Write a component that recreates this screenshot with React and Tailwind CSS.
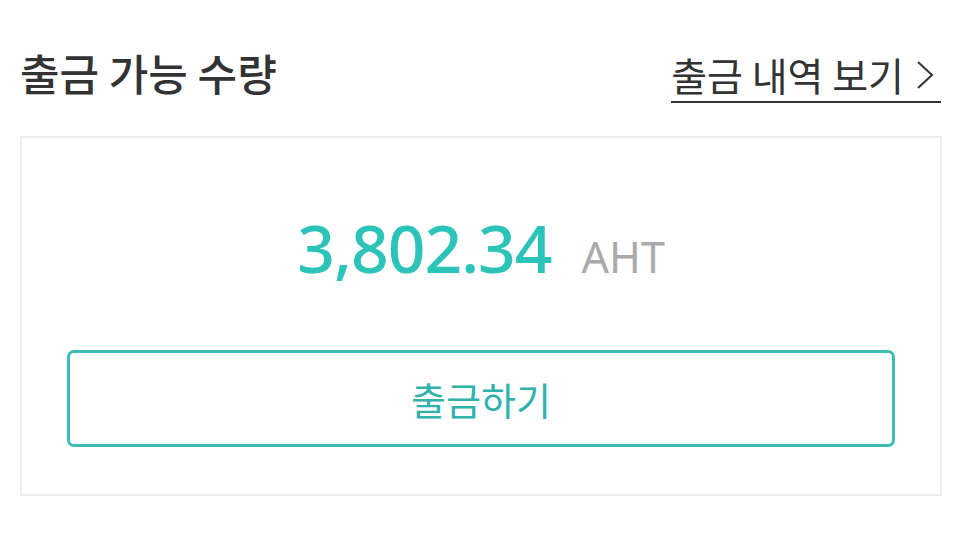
import React from 'react';

export default function App() {
    return (
        <div className="w-[960px] h-[533px] bg-white px-5 pt-[43px] font-['Noto_Sans_CJK_KR','Noto_Sans',sans-serif]">
            {/* Header */}
            <div className="flex flex-row items-start justify-between">
                <h1 className="text-[43px] leading-[58px] font-medium text-[#333333]">출금 가능 수량</h1>
                <a className="mt-[4px] -mr-[1px] flex flex-row items-center border-b-2 border-[#333333] pr-[7px] text-[39px] leading-[54px] text-[#333333]">
                    <span>출금 내역 보기</span>
                    <svg className="ml-[12px] mt-[2px]" width="18" height="30" viewBox="0 0 18 30" fill="none">
                        <path d="M2 2 L16 15 L2 28" stroke="#333333" strokeWidth="2" />
                    </svg>
                </a>
            </div>

            {/* Card */}
            <div className="mt-[33px] w-[922px] border-2 border-[#ededed] px-[45px] pt-[70px] pb-[47px]">
                <div className="flex flex-row items-baseline justify-center gap-[30px]">
                    <span className="text-[66px] leading-[78px] font-medium text-[#2cc3b8] font-['Noto_Sans',sans-serif] tracking-[-1px]">3,802.34</span>
                    <span className="text-[43px] leading-[60px] text-[#aaaaaa] font-['Noto_Sans',sans-serif]">AHT</span>
                </div>
                <button className="mt-[63px] flex h-[97px] w-full items-center justify-center rounded-[7px] border-[3px] border-[#3dbcb4] text-[38px] text-[#2eb3ac]">
                    출금하기
                </button>
            </div>
        </div>
    );
}
